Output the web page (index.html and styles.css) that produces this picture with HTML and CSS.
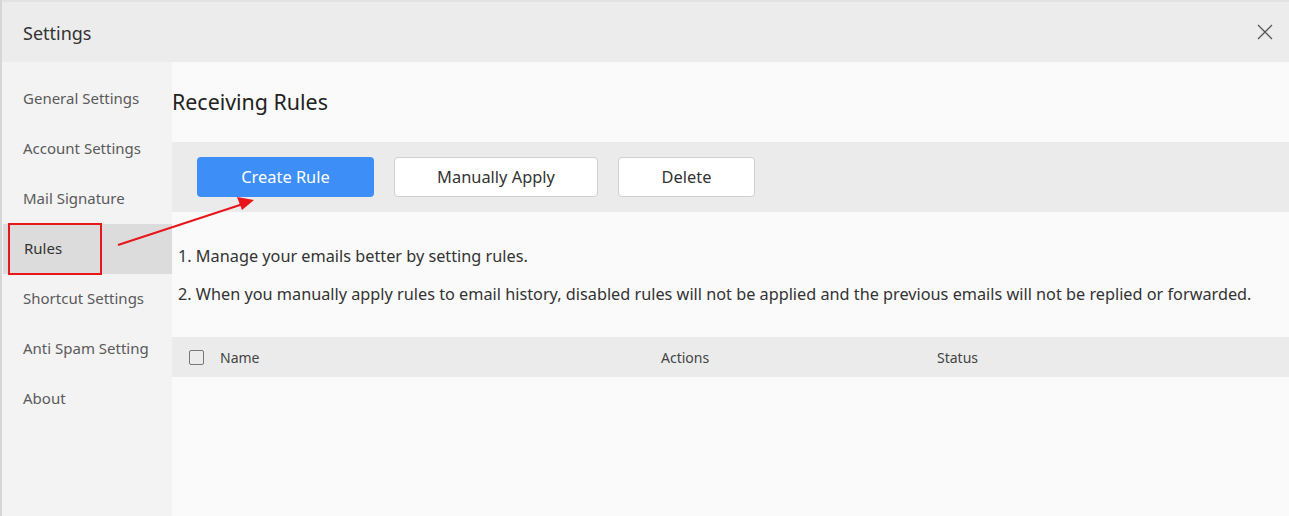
FILE: index.html
```html
<!DOCTYPE html>
<html lang="en">
<head>
  <meta charset="UTF-8">
  <title>Settings</title>
  <link rel="stylesheet" href="styles.css">
</head>
<body>
<div class="dialog">
  <div class="dialog-header">
    <span class="dialog-title">Settings</span>
    <svg class="close-icon" width="16" height="16" viewBox="0 0 16 16">
      <path d="M1 1 L15 15 M15 1 L1 15" stroke="#555" stroke-width="1.3" fill="none"/>
    </svg>
  </div>
  <div class="dialog-body">
    <ul class="side-menu">
      <li>General Settings</li>
      <li>Account Settings</li>
      <li>Mail Signature</li>
      <li class="active"><span class="highlight-box">Rules</span></li>
      <li>Shortcut Settings</li>
      <li>Anti Spam Setting</li>
      <li>About</li>
    </ul>
    <div class="content">
      <h2>Receiving Rules</h2>
      <div class="toolbar">
        <button class="btn btn-primary">Create Rule</button>
        <button class="btn btn-apply">Manually Apply</button>
        <button class="btn btn-delete">Delete</button>
      </div>
      <div class="tips">
        <p>1. Manage your emails better by setting rules.</p>
        <p>2. When you manually apply rules to email history, disabled rules will not be applied and the previous emails will not be replied or forwarded.</p>
      </div>
      <div class="table-head">
        <span class="checkbox"></span>
        <span class="col-name">Name</span>
        <span class="col-actions">Actions</span>
        <span class="col-status">Status</span>
      </div>
    </div>
  </div>
  <!-- annotation arrow -->
  <svg class="annotation" width="1289" height="516">
    <line x1="118" y1="245" x2="243" y2="204" stroke="#e8161a" stroke-width="2"/>
    <polygon points="254,200 237,197 242,210" fill="#e8161a"/>
  </svg>
</div>
</body>
</html>
```

FILE: styles.css
```css
body {
  margin: 0;
  padding: 0;
  background-color: #d6d6d6;
  font-family: "Noto Sans", "Open Sans", Arial, sans-serif;
  overflow: hidden;
}

.dialog {
  position: relative;
  margin-left: 2px;
  width: 1287px;
  height: 516px;
  background-color: #fafafa;
  display: flex;
  flex-direction: column;
}

.dialog-header {
  height: 62px;
  background-color: #ececec;
  display: flex;
  align-items: center;
  justify-content: space-between;
  padding: 0 16px 0 21px;
  box-sizing: border-box;
  border-top: 2px solid #e2e2e2;
}

.dialog-title {
  font-size: 18px;
  color: #333;
  margin-top: 1px;
}

.close-icon {
  display: block;
}

.dialog-body {
  flex: 1;
  display: flex;
}

.side-menu {
  list-style: none;
  margin: 0;
  padding: 12px 0 0;
  width: 170px;
  background-color: #f3f3f3;
}

.side-menu li {
  height: 50px;
  line-height: 48px;
  padding-left: 21px;
  font-size: 15px;
  color: #5a5a5a;
}

.side-menu li.active {
  background-color: #dcdcdc;
  margin-left: 1px;
  padding-left: 0;
}

.highlight-box {
  display: inline-block;
  box-sizing: border-box;
  width: 94px;
  height: 52px;
  margin-top: -1px;
  margin-left: 5px;
  padding-left: 14px;
  border: 2px solid #e8161a;
  line-height: 46px;
  color: #333;
  vertical-align: top;
}

.content {
  flex: 1;
}

.content h2 {
  margin: 0;
  padding: 25px 0 0;
  height: 80px;
  box-sizing: border-box;
  font-size: 21.4px;
  font-weight: normal;
  color: #222;
}

.toolbar {
  height: 70px;
  background-color: #ebebeb;
  display: flex;
  align-items: center;
  gap: 20px;
  padding-left: 25px;
}

.btn {
  height: 40px;
  padding-bottom: 3px;
  border-radius: 4px;
  font-family: inherit;
  font-size: 16.4px;
  cursor: pointer;
}

.btn-primary {
  width: 177px;
  background-color: #3d8ff7;
  color: #fff;
  border: none;
}

.btn-apply, .btn-delete {
  background-color: #fff;
  border: 1px solid #cfcfcf;
  color: #333;
}

.btn-apply {
  width: 204px;
}

.btn-delete {
  width: 137px;
}

.tips {
  padding: 33px 0 0 6px;
  height: 125px;
  box-sizing: border-box;
}

.tips p {
  margin: 0 0 16px;
  font-size: 16.25px;
  color: #333;
  line-height: 22px;
}

.table-head {
  height: 40px;
  background-color: #ebebeb;
  display: flex;
  align-items: center;
  font-size: 14px;
  color: #444;
}

.checkbox {
  width: 15px;
  height: 15px;
  border: 1px solid #777;
  border-radius: 2px;
  margin-left: 17px;
  box-sizing: border-box;
}

.col-name {
  margin-left: 16px;
  width: 441px;
}

.col-actions {
  width: 276px;
}

.annotation {
  position: absolute;
  left: -2px;
  top: 0;
  pointer-events: none;
}
```
